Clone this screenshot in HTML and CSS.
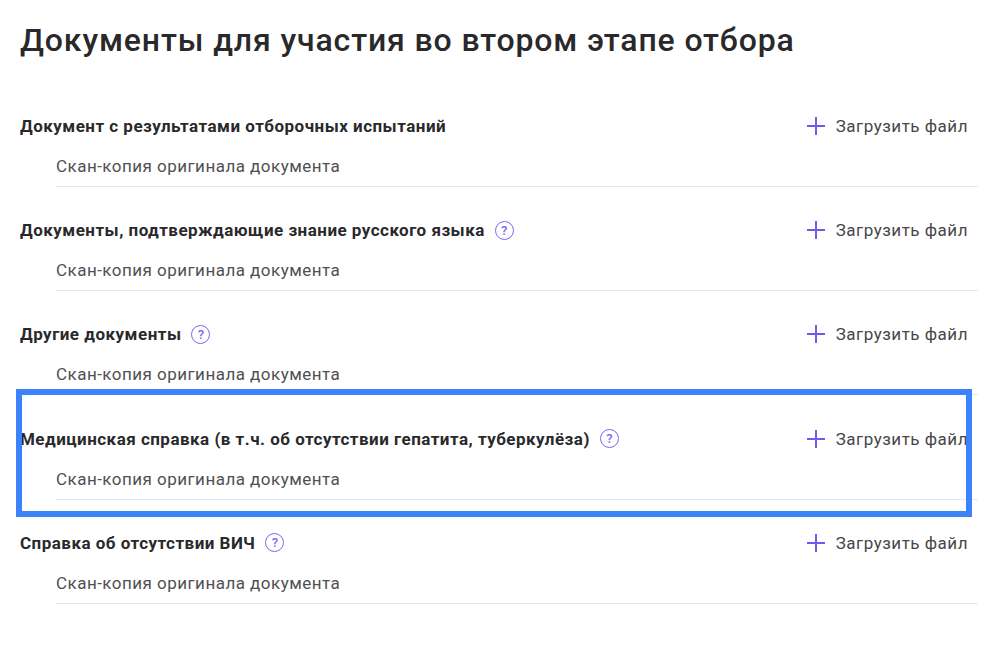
FILE: index.html
```html
<!DOCTYPE html>
<html lang="en">
<head>
    <meta charset="UTF-8">
    <meta name="viewport" content="width=device-width, initial-scale=1.0">
    <title>Документы</title>
    <link rel="stylesheet" href="styles.css">
</head>
<body>
    <h1>Документы для участия во втором этапе отбора</h1>

    <div class="doc-list">
        <div class="doc-row">
            <div class="doc-head">
                <span class="doc-name">Документ с результатами отборочных испытаний</span>
                <a class="upload"><svg class="plus" viewBox="0 0 18 18"><path d="M9 0v18M0 9h18"/></svg>Загрузить файл</a>
            </div>
            <div class="doc-desc">Скан-копия оригинала документа</div>
        </div>
        <div class="doc-row">
            <div class="doc-head">
                <span class="doc-name">Документы, подтверждающие знание русского языка</span>
                <span class="hint">?</span>
                <a class="upload"><svg class="plus" viewBox="0 0 18 18"><path d="M9 0v18M0 9h18"/></svg>Загрузить файл</a>
            </div>
            <div class="doc-desc">Скан-копия оригинала документа</div>
        </div>
        <div class="doc-row">
            <div class="doc-head">
                <span class="doc-name">Другие документы</span>
                <span class="hint">?</span>
                <a class="upload"><svg class="plus" viewBox="0 0 18 18"><path d="M9 0v18M0 9h18"/></svg>Загрузить файл</a>
            </div>
            <div class="doc-desc">Скан-копия оригинала документа</div>
        </div>
        <div class="doc-row">
            <div class="doc-head">
                <span class="doc-name">Медицинская справка (в т.ч. об отсутствии гепатита, туберкулёза)</span>
                <span class="hint">?</span>
                <a class="upload"><svg class="plus" viewBox="0 0 18 18"><path d="M9 0v18M0 9h18"/></svg>Загрузить файл</a>
            </div>
            <div class="doc-desc">Скан-копия оригинала документа</div>
            <div class="highlight"></div>
        </div>
        <div class="doc-row">
            <div class="doc-head">
                <span class="doc-name">Справка об отсутствии ВИЧ</span>
                <span class="hint">?</span>
                <a class="upload"><svg class="plus" viewBox="0 0 18 18"><path d="M9 0v18M0 9h18"/></svg>Загрузить файл</a>
            </div>
            <div class="doc-desc">Скан-копия оригинала документа</div>
        </div>
    </div>
</body>
</html>
```

FILE: styles.css
```css
* {
    margin: 0;
    padding: 0;
    box-sizing: border-box;
    font-family: 'Roboto', 'Liberation Sans', sans-serif;
}

body {
    background-color: #fff;
    color: #2b2b2e;
    padding: 20px 22px 0 20px;
    overflow: hidden;
}

h1 {
    font-size: 32px;
    line-height: 40px;
    font-weight: 500;
    letter-spacing: 0.87px;
    color: #29292b;
    margin-bottom: 46px;
}

.doc-row {
    position: relative;
    height: 104.2px;
    padding-top: 4px;
}

.doc-head {
    display: flex;
    align-items: center;
    height: 32px;
}

.doc-name {
    font-size: 17px;
    font-weight: 700;
    letter-spacing: 0.48px;
    color: #29292b;
}

.hint {
    display: flex;
    align-items: center;
    justify-content: center;
    width: 19px;
    height: 19px;
    margin-left: 10px;
    border: 1.5px solid #7b68f0;
    border-radius: 50%;
    font-size: 13px;
    font-weight: 500;
    color: #7b68f0;
}

.upload {
    display: flex;
    align-items: center;
    margin-left: auto;
    margin-right: 10px;
    font-size: 17px;
    letter-spacing: 0.5px;
    color: #47474a;
}

.plus {
    width: 18px;
    height: 18px;
    margin-right: 11px;
    fill: none;
    stroke: #6c5cf2;
    stroke-width: 2;
}

.doc-desc {
    margin: 9px 0 0 36px;
    height: 36px;
    line-height: 30px;
    font-size: 17px;
    letter-spacing: 0.47px;
    color: #505054;
    border-bottom: 1px solid #e6e6ef;
}

.highlight {
    position: absolute;
    top: -30px;
    left: -4px;
    width: 956px;
    height: 128px;
    border: 6px solid #3b82fb;
}
```
